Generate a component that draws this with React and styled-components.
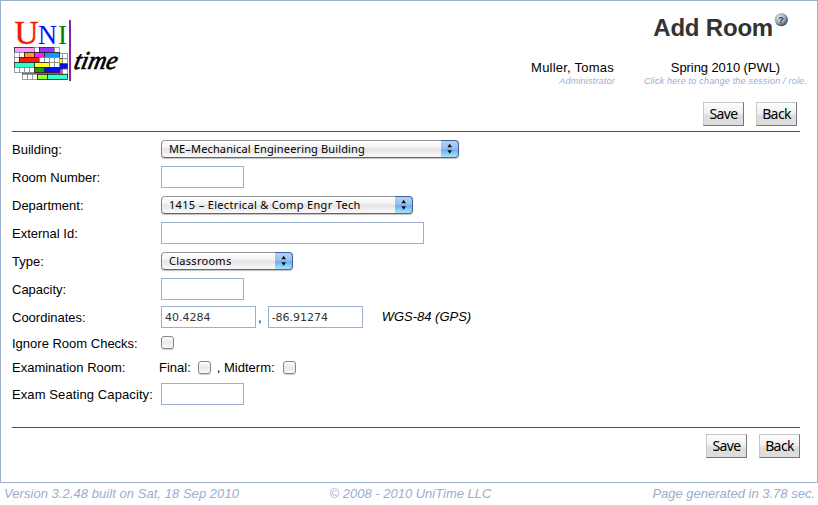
import React from "react";
import styled, { createGlobalStyle } from "styled-components";

const GlobalStyle = createGlobalStyle`
  * { box-sizing: border-box; }
  body { margin: 0; background: #fff; color: #000; font-family: "Liberation Sans", Arial, sans-serif; font-size: 13px; }
`;

const Page = styled.div`
  width: 818px;
  height: 505px;
  overflow: hidden;
`;

const Frame = styled.main`
  height: 483px;
  border: 1px solid #9cb0ce;
  padding: 0 17px 0 11px;
`;

const Header = styled.header`
  display: flex;
  height: 94px;
  justify-content: space-between;
  margin-right: -7px;
`;

const Logo = styled.svg`
  display: block;
  width: 112px;
  height: 70px;
  margin-top: 14px;
`;

const HeaderRight = styled.div`
  display: flex;
  flex-direction: column;
  align-items: flex-end;
`;

const TitleRow = styled.div`
  display: flex;
  height: 57px;
  padding: 11px 18px 0 0;
`;

const Title = styled.h1`
  margin: 2px 1px 0 0;
  font-size: 24px;
  line-height: 28px;
  letter-spacing: -0.2px;
  color: #333;
`;

const HelpIcon = styled.svg`
  width: 15px;
  height: 15px;
`;

const Session = styled.div`
  display: flex;
  gap: 29px;
`;

const SessionItem = styled.div`
  display: flex;
  flex-direction: column;
  align-items: ${(p) => p.$align};
  font-size: 13px;
  line-height: 19px;
`;

const Hint = styled.span`
  font-size: 9px;
  line-height: 9px;
  font-style: italic;
  color: #9cacd0;
  letter-spacing: 0.2px;
`;

const Actions = styled.div`
  display: flex;
  justify-content: flex-end;
  gap: 12px;
  padding: ${(p) => p.$pad};
`;

const Button = styled.button`
  width: 41px;
  height: 24px;
  padding: 0;
  border: 1px solid;
  border-color: #c8c8c8 #777 #777 #c8c8c8;
  background: linear-gradient(#fdfdfd, #f0f0f0 45%, #dcdcdc 60%, #dedede);
  font: 14px/20px "Noto Sans", "Open Sans", sans-serif;
  letter-spacing: -0.6px;
  color: #000;
`;

const Rule = styled.hr`
  height: 1px;
  margin: 0;
  border: 0;
  background: #3b5170;
`;

const Form = styled.form`
  padding-top: 3px;
  height: 295px;
`;

const Row = styled.div`
  display: grid;
  grid-template-columns: 149px 1fr;
  align-items: center;
  height: ${(p) => p.$height || 28}px;
`;

const Label = styled.label`
  white-space: nowrap;
  letter-spacing: ${(p) => p.$spacing || "0"};
`;

const Field = styled.div`
  display: flex;
  align-items: center;
`;

const Input = styled.input`
  width: ${(p) => p.$width}px;
  height: 22px;
  padding: 0 3px;
  border: 1px solid #9cb0ce;
  border-radius: 0;
  outline: 0;
  background: #fff;
  color: #333;
  font: 11px "DejaVu Sans", sans-serif;
`;

const SelectBox = styled.div`
  display: flex;
  justify-content: space-between;
  width: ${(p) => p.$width}px;
  height: 18px;
  border: 1px solid;
  border-color: #979797 #888 #666 #888;
  border-radius: 4px;
  background: linear-gradient(#fff, #f3f3f3 40%, #e4e4e4 52%, #fafafa);
  box-shadow: 0 1px 1px rgba(0, 0, 0, 0.25);
  padding-left: 7px;
  font: 11px/16px "Noto Sans", "Open Sans", sans-serif;
  letter-spacing: ${(p) => p.$spacing || "0.2px"};
  white-space: nowrap;
`;

const SelectCap = styled.svg`
  width: 18px;
  height: 18px;
  margin: -1px -1px 0 0;
`;

const Check = styled.input.attrs({ type: "checkbox" })`
  appearance: none;
  width: 13px;
  height: 13px;
  margin: 0 0 ${(p) => p.$lift || 0}px;
  border: 1px solid #858585;
  border-radius: 3px;
  background: linear-gradient(#fff, #e8e8e8 50%, #fafafa);
  box-shadow: 0 1px 1px rgba(0, 0, 0, 0.2);
`;

const Inline = styled.span`
  margin: ${(p) => p.$margin || "0"};
  letter-spacing: ${(p) => p.$spacing || "0"};
  font-style: ${(p) => (p.$italic ? "italic" : "normal")};
  white-space: pre;
`;

const Footer = styled.footer`
  display: grid;
  grid-template-columns: 1fr auto 1fr;
  padding: 2px 3px 0 4px;
  font-size: 13px;
  line-height: 17px;
  font-style: italic;
  color: #9cacd0;
  & > :first-child { letter-spacing: 0.05px; }
  & > :nth-child(2) { padding-left: 2px; }
  & > :last-child { text-align: right; }
`;

const front = [
  [["#ff99ff", 4], ["#fff", 1], ["#9933ff", 3], ["#fff", 1]],
  [["#fff", 1], ["#fff", 1], ["#ff9933", 2], ["#ff22ff", 2], ["#1199ff", 3]],
  [["#fff", 1], ["#ff1a00", 4], ["#fff", 1], ["#fff", 1], ["#fff", 1], ["#fff", 1]],
  [["#33ffcc", 4], ["#ffff22", 3], ["#fff", 1], ["#fff", 1]],
  [["#fff", 1], ["#fff", 1], ["#fff", 1], ["#fff", 1], ["#229900", 2], ["#0011ff", 3]],
];
const back = [
  [["#fff", 7], ["#fff", 1], ["#fff", 1]],
  [["#ffff22", 8], ["#fff", 1]],
  [["#0011ff", 9]],
  [["#ff22ff", 8], ["#fff", 1]],
  [["#fff", 1], ["#fff", 1], ["#fff", 1], ["#99ff33", 2], ["#33ffcc", 4]],
];

function Blocks({ rows, x, y, height = 5 }) {
  return rows.map((row, r) => {
    let col = 0;
    return row.map(([color, span], i) => {
      const left = x + col * 5;
      col += span;
      return (
        <rect key={`${r}-${i}`} x={left} y={y + r * height} width={span * 5} height={height}
          fill={color} stroke={color === "#fff" ? "#888" : "#222"} strokeWidth=".8" />
      );
    });
  });
}

function UniTimeLogo() {
  return (
    <Logo viewBox="12 15 112 70" aria-label="UniTime">
      <g fontFamily="Liberation Serif, serif" strokeWidth=".4">
        <text x="14.5" y="44" fontSize="34" fill="#f21a00" stroke="#f21a00" textLength="24" lengthAdjust="spacingAndGlyphs">U</text>
        <text x="38" y="44" fontSize="27" fill="#0011ff" textLength="19" lengthAdjust="spacingAndGlyphs">N</text>
        <text x="58" y="44" fontSize="27" fill="#0a7a0a" textLength="9" lengthAdjust="spacingAndGlyphs">I</text>
      </g>
      <Blocks rows={back} x={22.5} y={53.5} height={5.2} />
      <Blocks rows={front} x={14.5} y={47.5} />
      <rect x="69" y="20" width="2" height="61" fill="#8a22aa" />
      <text transform="translate(73 69) skewX(-12)" fontFamily="Liberation Serif, serif" fontStyle="italic"
        fontSize="26" stroke="#000" strokeWidth=".7" textLength="43" lengthAdjust="spacingAndGlyphs">time</text>
    </Logo>
  );
}

function Help() {
  return (
    <HelpIcon viewBox="0 0 15 15">
      <defs>
        <radialGradient id="ball" cx=".38" cy=".35" r=".65">
          <stop offset="0" stopColor="#dde5ee" />
          <stop offset=".6" stopColor="#9eafc0" />
          <stop offset="1" stopColor="#3c4856" />
        </radialGradient>
      </defs>
      <circle cx="7.3" cy="7.6" r="6.6" fill="url(#ball)" />
      <text x="7" y="10.6" textAnchor="middle" fontFamily="Liberation Sans, sans-serif" fontWeight="bold" fontSize="9" fill="#27323e">?</text>
    </HelpIcon>
  );
}

function Select({ width, spacing, children }) {
  return (
    <SelectBox $width={width} $spacing={spacing}>
      {children}
      <SelectCap viewBox="0 0 18 18">
        <defs>
          <linearGradient id="cap" x2="0" y2="1">
            <stop offset="0" stopColor="#b9d3f2" />
            <stop offset=".45" stopColor="#95c2f1" />
            <stop offset=".55" stopColor="#69aeee" />
            <stop offset="1" stopColor="#b4ecff" />
          </linearGradient>
        </defs>
        <path d="M0 0H14Q18 0 18 4V14Q18 18 14 18H0Z" fill="url(#cap)" />
        <path d="M0 .5H14Q17.5 .5 17.5 4V14Q17.5 17.5 14 17.5H0" fill="none" stroke="#35539b" strokeWidth=".9" />
        <path d="M6.4 7.3L8.7 3.8L11 7.3ZM6.4 10.3H11L8.7 13.8Z" fill="#111" />
      </SelectCap>
    </SelectBox>
  );
}

export default function App() {
  return (
    <Page>
      <GlobalStyle />
      <Frame>
        <Header>
          <UniTimeLogo />
          <HeaderRight>
            <TitleRow>
              <Title>Add Room</Title>
              <Help />
            </TitleRow>
            <Session>
              <SessionItem $align="flex-end">
                <Inline $spacing="0.22px" $margin="0 1px 0 0">Muller, Tomas</Inline>
                <Hint>Administrator</Hint>
              </SessionItem>
              <SessionItem $align="center">
                <Inline $spacing="-0.08px">Spring 2010 (PWL)</Inline>
                <Hint>Click here to change the session / role.</Hint>
              </SessionItem>
            </Session>
          </HeaderRight>
        </Header>
        <Actions $pad="7px 3px 5px 0">
          <Button>Save</Button>
          <Button>Back</Button>
        </Actions>
        <Rule />
        <Form>
          <Row><Label>Building:</Label><Field><Select width={298} spacing="0.14px">ME–Mechanical Engineering Building</Select></Field></Row>
          <Row><Label>Room Number:</Label><Field><Input $width={83} /></Field></Row>
          <Row><Label>Department:</Label><Field><Select width={252} spacing="0.33px">1415 – Electrical &amp; Comp Engr Tech</Select></Field></Row>
          <Row><Label>External Id:</Label><Field><Input $width={263} /></Field></Row>
          <Row><Label>Type:</Label><Field><Select width={132} spacing="0.28px">Classrooms</Select></Field></Row>
          <Row><Label>Capacity:</Label><Field><Input $width={83} /></Field></Row>
          <Row>
            <Label>Coordinates:</Label>
            <Field>
              <Input $width={95} defaultValue="40.4284" />
              <Inline $margin="0 6px 0 2px">,</Inline>
              <Input $width={95} defaultValue="-86.91274" />
              <Inline $italic $margin="0 0 2px 19px">WGS-84 (GPS)</Inline>
            </Field>
          </Row>
          <Row $height={24}><Label>Ignore Room Checks:</Label><Field><Check $lift={2} /></Field></Row>
          <Row $height={25}>
            <Label>Examination Room:</Label>
            <Field>
              <Inline $margin="0 7px 0 -2px">Final:</Inline>
              <Check />
              <Inline $margin="0 8px 0 6px">, Midterm:</Inline>
              <Check />
            </Field>
          </Row>
          <Row><Label $spacing="0.1px">Exam Seating Capacity:</Label><Field><Input $width={83} /></Field></Row>
        </Form>
        <Rule />
        <Actions $pad="6px 0 0">
          <Button>Save</Button>
          <Button>Back</Button>
        </Actions>
      </Frame>
      <Footer>
        <span>Version 3.2.48 built on Sat, 18 Sep 2010</span>
        <span>© 2008 - 2010 UniTime LLC</span>
        <span>Page generated in 3.78 sec.</span>
      </Footer>
    </Page>
  );
}
